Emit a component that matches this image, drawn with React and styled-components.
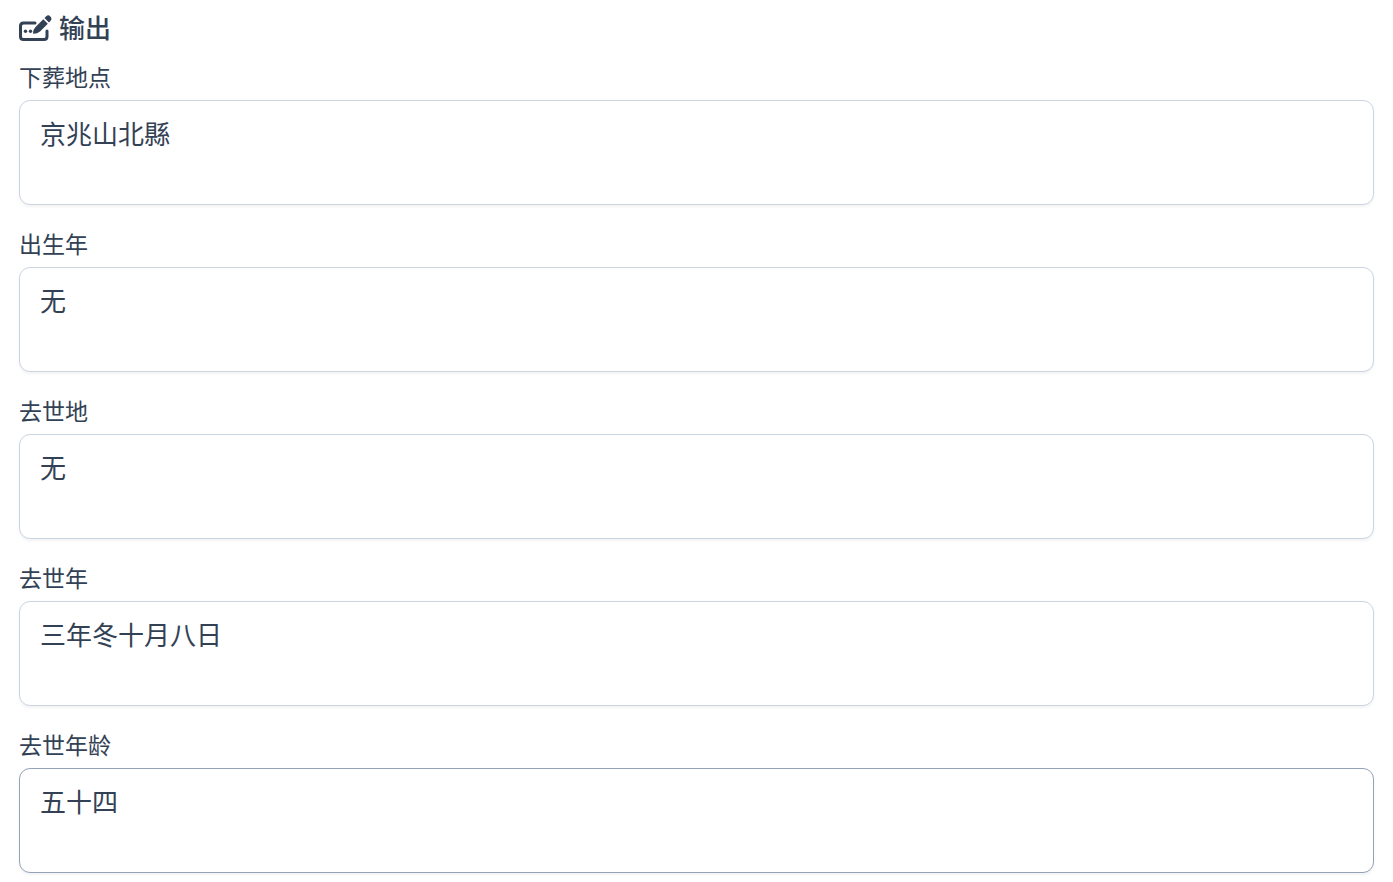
import React, { useState } from 'react';
import styled, { createGlobalStyle } from 'styled-components';

const GlobalStyle = createGlobalStyle`
    *, *::before, *::after { box-sizing: border-box; }
    body {
        margin: 0;
        background-color: #fff;
        color: #334155;
        font-family: "Noto Sans CJK SC", sans-serif;
    }
`;

const Panel = styled.section`
    display: flex;
    flex-direction: column;
    padding: 8px 19px;
`;

const Title = styled.h2`
    display: flex;
    align-items: center;
    gap: 8px;
    margin: 0 0 12px;
    font-size: 26px;
    font-weight: 500;
    line-height: 38px;
`;

const TitleIcon = styled.svg`
    width: 32px;
    height: 28px;
    overflow: visible;
`;

const FieldList = styled.div`
    display: flex;
    flex-direction: column;
    gap: 20px;
`;

const Field = styled.div`
    display: flex;
    flex-direction: column;
`;

const Label = styled.label`
    margin-bottom: 6px;
    font-size: 23px;
    line-height: 36px;
`;

const TextArea = styled.textarea`
    display: block;
    width: 100%;
    height: 105px;
    padding: 12px 20px;
    border: 1px solid ${({ $active }) => ($active ? '#94a3b8' : '#cbd5e1')};
    border-radius: 11px;
    outline: none;
    resize: none;
    background-color: #fff;
    box-shadow: 0 2px 3px rgba(18, 18, 23, 0.05);
    color: inherit;
    font-family: inherit;
    font-size: 26px;
    line-height: 39px;
`;

const FIELDS = [
    { id: 'burial-place', label: '下葬地点', value: '京兆山北縣' },
    { id: 'birth-year', label: '出生年', value: '无' },
    { id: 'death-place', label: '去世地', value: '无' },
    { id: 'death-year', label: '去世年', value: '三年冬十月八日' },
    { id: 'death-age', label: '去世年龄', value: '五十四', active: true },
];

const FormEditIcon = () => (
    <TitleIcon viewBox="0 0 32 28" fill="none" aria-hidden="true">
        <path
            d="M16 10H4.500Q1.500 10 1.500 13V23.500Q1.500 26.500 4.500 26.500H25Q28 26.500 28 23.500V18"
            stroke="currentColor"
            strokeWidth="3"
            strokeLinecap="round"
        />
        <circle cx="6.500" cy="18.300" r="1.700" fill="currentColor" />
        <circle cx="11.500" cy="18.300" r="1.700" fill="currentColor" />
        <path
            d="M14 20.200Q14.200 16.300 16.500 14L24.300 6.200L28.800 10.700L21 18.400Q18.400 20.600 14.500 20.700Q14 20.700 14 20.200Z M25.500 5L27.200 3.300Q29.300 1.300 31.300 3.400Q33.500 5.600 31.600 7.800L30 9.500Z"
            fill="currentColor"
        />
    </TitleIcon>
);

const App = () => {
    const [values, setValues] = useState(() =>
        Object.fromEntries(FIELDS.map(({ id, value }) => [id, value]))
    );

    const handleChange = (e) => {
        const { id, value } = e.target;
        setValues((prev) => ({ ...prev, [id]: value }));
    };

    return (
        <>
            <GlobalStyle />
            <Panel>
                <Title>
                    <FormEditIcon />
                    输出
                </Title>
                <FieldList>
                    {FIELDS.map(({ id, label, active }) => (
                        <Field key={id}>
                            <Label htmlFor={id}>{label}</Label>
                            <TextArea id={id} $active={active} value={values[id]} onChange={handleChange} />
                        </Field>
                    ))}
                </FieldList>
            </Panel>
        </>
    );
};

export default App;
